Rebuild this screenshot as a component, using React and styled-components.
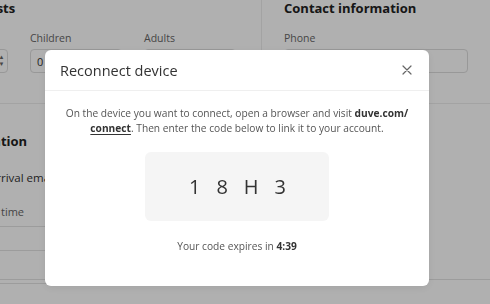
import React from "react";
import styled, { createGlobalStyle } from "styled-components";

const Global = createGlobalStyle`
  html, body { margin: 0; padding: 0; background: #fff; }
  body { font-family: "Open Sans", "Noto Sans", sans-serif; overflow: hidden; width: 490px; height: 304px; }
  * { box-sizing: border-box; }
`;

const Page = styled.div`
  width: 540px;
  margin-left: -29px;
  color: #333;
`;

const TopSection = styled.section`
  display: grid;
  grid-template-columns: 291px 1fr;
  height: 104px;
  border-bottom: 1px solid #ececec;
`;

const Column = styled.div`
  padding: ${(p) => (p.$right ? "0 22px 0 22px" : "0 22px 0 0")};
  border-right: ${(p) => (p.$right ? "none" : "1px solid #ececec")};
`;

const Heading = styled.h3`
  margin: 0;
  font-size: 13px;
  font-weight: 700;
  line-height: 17px;
  color: #222;
`;

const FieldRow = styled.div`
  display: grid;
  grid-template-columns: ${(p) => p.$cols};
  column-gap: 22px;
  margin-top: 14px;
`;

const Field = styled.div`
  display: flex;
  flex-direction: column;
  gap: 4px;
`;

const Label = styled.label`
  font-size: 10.5px;
  line-height: 14px;
  color: #666;
  white-space: nowrap;
`;

const Input = styled.div`
  height: 24px;
  border: 1px solid #ddd;
  border-radius: 4px;
  display: flex;
  align-items: center;
  justify-content: space-between;
  font-size: 11px;
  color: #333;
  padding-left: 6px;
  overflow: hidden;
`;

const Stepper = styled.div`
  width: 12px;
  height: 100%;
  border-left: 1px solid #ddd;
  display: flex;
  flex-direction: column;
  align-items: center;
  justify-content: center;
  font-size: 6px;
  line-height: 7px;
  color: #666;
`;

const LowerSection = styled.section`
  height: 176px;
  width: 291px;
  padding-top: 29px;
`;

const CheckRow = styled.div`
  display: flex;
  align-items: center;
  gap: 4px;
  margin-top: 20px;
  font-size: 11.5px;
  color: #333;
`;

const Box = styled.span`
  width: 14px;
  height: 14px;
  border: 1px solid #ccc;
  border-radius: 3px;
  flex: none;
`;

const TableHead = styled.div`
  margin-top: 17px;
  font-size: 11px;
  color: #666;
  height: 25px;
  line-height: 18px;
  padding-top: 1px;
  text-indent: -6px;
  border-bottom: 1px solid #e2e2e2;
`;

const TableRow = styled.div`
  height: ${(p) => p.$h}px;
  border-bottom: 1px solid #e2e2e2;
`;

const BottomRule = styled.div`
  width: 540px;
  border-top: 1px solid #e2e2e2;
  margin-top: -1px;
`;

const Overlay = styled.div`
  position: fixed;
  inset: 0;
  background: rgba(0, 0, 0, 0.31);
  display: flex;
  align-items: flex-start;
  padding: 50px 0 0 45px;
`;

const Modal = styled.div`
  width: 384px;
  background: #fff;
  border-radius: 6px;
  box-shadow: 0 2px 8px rgba(0, 0, 0, 0.08);
  overflow: hidden;
`;

const ModalHeader = styled.header`
  height: 41px;
  display: flex;
  align-items: center;
  justify-content: space-between;
  padding: 0 17px 0 15px;
  border-bottom: 1px solid #efefef;
`;

const Title = styled.h2`
  margin: 0;
  font-size: 14.5px;
  font-weight: 400;
  color: #333;
`;

const CloseButton = styled.button`
  border: 0;
  background: none;
  padding: 0;
  width: 10px;
  height: 10px;
  display: flex;
  cursor: pointer;
`;

const ModalBody = styled.div`
  padding: 15px 8px 32px;
  display: flex;
  flex-direction: column;
  align-items: center;
`;

const Text = styled.p`
  margin: 0;
  font-size: 10.2px;
  line-height: 15px;
  color: #555;
  text-align: center;
  b { font-weight: 700; color: #333; }
  u { text-underline-offset: 2px; }
`;

const Line = styled.span`
  display: block;
  white-space: nowrap;
`;

const CodeBox = styled.div`
  margin-top: 16px;
  width: 184px;
  height: 69px;
  background: #f5f5f5;
  border-radius: 6px;
  display: flex;
  align-items: center;
  justify-content: center;
  gap: 16px;
  padding-left: 1px;
  margin-bottom: 18px;
`;

const CodeChar = styled.span`
  font-size: 20px;
  line-height: 24px;
  color: #333;
`;

export default function App() {
  return (
    <>
      <Global />
      <Page>
        <TopSection>
          <Column>
            <Heading>Guests</Heading>
            <FieldRow $cols="37px 92px 92px">
              <Field>
                <Label>&nbsp;</Label>
                <Input>
                  <span />
                  <Stepper>
                    <span>▲</span>
                    <span>▼</span>
                  </Stepper>
                </Input>
              </Field>
              <Field>
                <Label>Children</Label>
                <Input>
                  <span>0</span>
                  <Stepper />
                </Input>
              </Field>
              <Field>
                <Label>Adults</Label>
                <Input>
                  <span>2</span>
                  <Stepper />
                </Input>
              </Field>
            </FieldRow>
          </Column>
          <Column $right>
            <Heading>Contact information</Heading>
            <FieldRow $cols="184px">
              <Field>
                <Label>Phone</Label>
                <Input />
              </Field>
            </FieldRow>
          </Column>
        </TopSection>
        <LowerSection>
          <Heading>Location</Heading>
          <CheckRow>
            <Box />
            <span>Arrival email</span>
          </CheckRow>
          <TableHead>Arrival time</TableHead>
          <TableRow $h={24} />
          <TableRow $h={33} />
        </LowerSection>
        <BottomRule />
      </Page>
      <Overlay>
        <Modal role="dialog" aria-label="Reconnect device">
          <ModalHeader>
            <Title>Reconnect device</Title>
            <CloseButton aria-label="Close">
              <svg width="10" height="10" viewBox="0 0 10 10">
                <path d="M1 1L9 9M9 1L1 9" stroke="#666" strokeWidth="1.2" strokeLinecap="round" />
              </svg>
            </CloseButton>
          </ModalHeader>
          <ModalBody>
            <Text>
              <Line>
                On the device you want to connect, open a browser and visit <b>duve.com/</b>
              </Line>
              <Line>
                <b><u>connect</u></b>. Then enter the code below to link it to your account.
              </Line>
            </Text>
            <CodeBox>
              {"18H3".split("").map((c, i) => (
                <CodeChar key={i}>{c}</CodeChar>
              ))}
            </CodeBox>
            <Text>
              Your code expires in <b>4:39</b>
            </Text>
          </ModalBody>
        </Modal>
      </Overlay>
    </>
  );
}
